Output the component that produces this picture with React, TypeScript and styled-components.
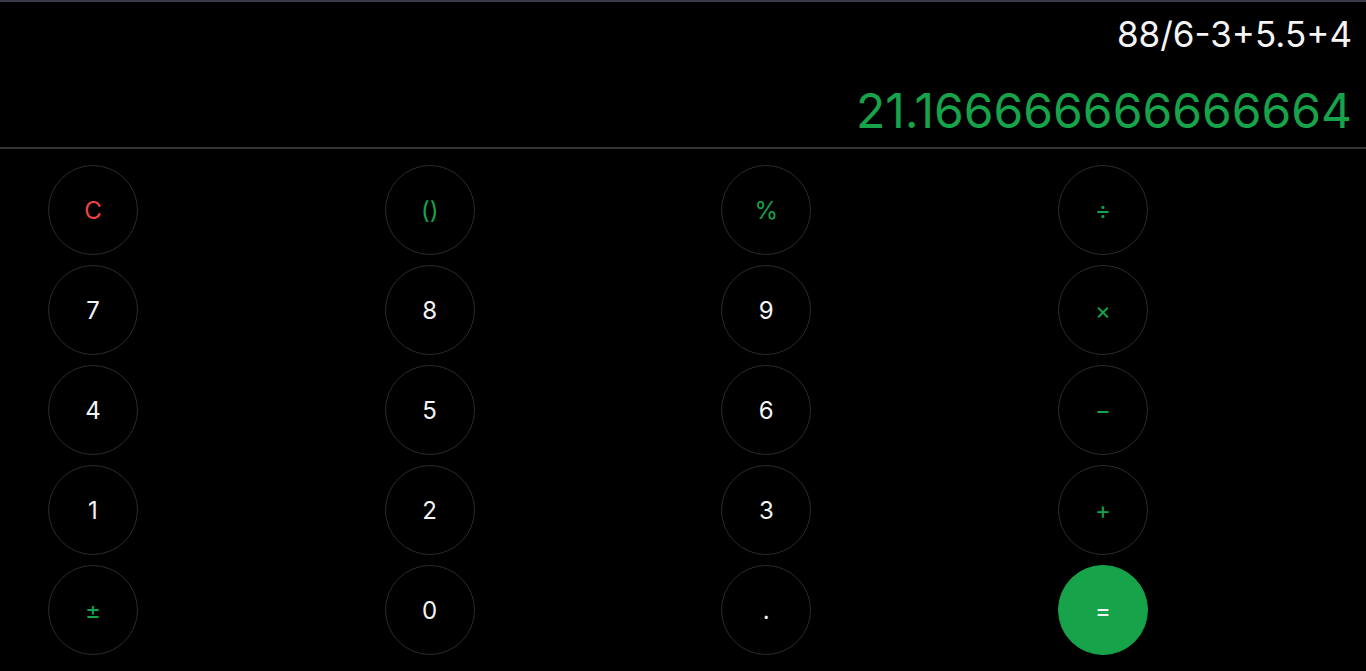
import React from "react";
import styled, { createGlobalStyle } from "styled-components";

const Global = createGlobalStyle`
  html, body { margin: 0; padding: 0; background: #000; }
  body { font-family: Inter, "Noto Sans", sans-serif; }
  * { box-sizing: border-box; }
`;

const Page = styled.div`
  width: 1366px;
  height: 671px;
  background: #000;
  border-top: 2px solid #393a4a;
  display: flex;
  flex-direction: column;
  overflow: hidden;
`;

const Display = styled.div`
  display: flex;
  flex-direction: column;
  align-items: flex-end;
  padding: 10px 14px 7px;
  border-bottom: 2px solid #333;
`;

const Expression = styled.div`
  color: #f5f5f5;
  font-size: 35px;
  line-height: 44px;
  font-weight: 400;
`;

const Result = styled.div`
  margin-top: 26px;
  color: #16a34a;
  font-size: 48px;
  line-height: 58px;
  font-weight: 400;
`;

const Keypad = styled.div`
  display: grid;
  grid-template-columns: repeat(4, 90px);
  grid-auto-rows: 90px;
  column-gap: 246.67px;
  row-gap: 10px;
  padding: 16px 0 0 48px;
`;

type Tone = "digit" | "op" | "clear" | "equals";

const toneColor: Record<Tone, string> = {
  digit: "#f3f4f6",
  op: "#16a34a",
  clear: "#ef4444",
  equals: "#f3f4f6",
};

const Key = styled.button<{ $tone: Tone }>`
  width: 90px;
  height: 90px;
  border-radius: 50%;
  border: 1px solid ${(p) => (p.$tone === "equals" ? "#16a34a" : "#2b2b2b")};
  background: ${(p) => (p.$tone === "equals" ? "#16a34a" : "#000")};
  color: ${(p) => toneColor[p.$tone]};
  font-family: Inter, "Noto Sans", sans-serif;
  font-size: 24px;
  font-weight: 400;
  display: flex;
  align-items: center;
  justify-content: center;
  padding: 0;
  cursor: pointer;
`;

const keys: { label: string; tone: Tone }[] = [
  { label: "C", tone: "clear" },
  { label: "()", tone: "op" },
  { label: "%", tone: "op" },
  { label: "÷", tone: "op" },
  { label: "7", tone: "digit" },
  { label: "8", tone: "digit" },
  { label: "9", tone: "digit" },
  { label: "×", tone: "op" },
  { label: "4", tone: "digit" },
  { label: "5", tone: "digit" },
  { label: "6", tone: "digit" },
  { label: "−", tone: "op" },
  { label: "1", tone: "digit" },
  { label: "2", tone: "digit" },
  { label: "3", tone: "digit" },
  { label: "+", tone: "op" },
  { label: "±", tone: "op" },
  { label: "0", tone: "digit" },
  { label: ".", tone: "digit" },
  { label: "=", tone: "equals" },
];

export default function App() {
  return (
    <>
      <Global />
      <Page>
        <Display>
          <Expression>88/6-3+5.5+4</Expression>
          <Result>21.166666666666664</Result>
        </Display>
        <Keypad>
          {keys.map((k) => (
            <Key key={k.label} $tone={k.tone}>
              {k.label}
            </Key>
          ))}
        </Keypad>
      </Page>
    </>
  );
}
